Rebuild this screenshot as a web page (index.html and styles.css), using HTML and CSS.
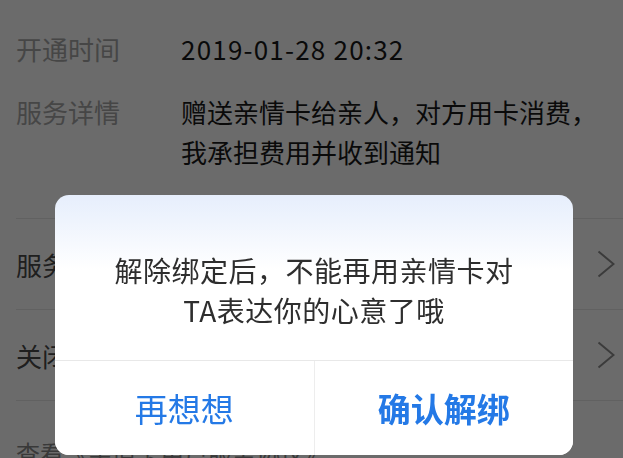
FILE: index.html
```html
<!DOCTYPE html>
<html lang="zh-CN">
<head>
<meta charset="utf-8">
<title>亲情卡</title>
<link rel="stylesheet" href="styles.css">
</head>
<body>
<div class="page">
  <section class="info">
    <div class="info-row">
      <div class="info-label">开通时间</div>
      <div class="info-value date">2019-01-28 20:32</div>
    </div>
    <div class="info-row">
      <div class="info-label">服务详情</div>
      <div class="info-value">赠送亲情卡给亲人，对方用卡消费，我承担费用并收到通知</div>
    </div>
  </section>
  <section class="menu">
    <div class="menu-row">
      <span class="menu-text">服务协议</span>
      <svg class="chevron" viewBox="0 0 18 28" width="18" height="28"><polyline points="1.5,1.5 16.5,14 1.5,26.5" fill="none" stroke="#8e8e8e" stroke-width="2"/></svg>
    </div>
    <div class="menu-row">
      <span class="menu-text">关闭亲情卡</span>
      <svg class="chevron" viewBox="0 0 18 28" width="18" height="28"><polyline points="1.5,1.5 16.5,14 1.5,26.5" fill="none" stroke="#8e8e8e" stroke-width="2"/></svg>
    </div>
    <div class="menu-link">查看《亲情卡用户服务协议》</div>
  </section>
</div>
<div class="mask"></div>
<div class="dialog">
  <div class="dialog-msg">解除绑定后，不能再用亲情卡对<br>TA表达你的心意了哦</div>
  <div class="dialog-actions">
    <div class="dialog-btn cancel">再想想</div>
    <div class="dialog-btn confirm">确认解绑</div>
  </div>
</div>
</body>
</html>
```
FILE: styles.css
```css
html, body {
  margin: 0;
  padding: 0;
  background: #ffffff;
  font-family: "Noto Sans CJK SC", "Noto Sans", sans-serif;
  overflow: hidden;
}
.page {
  height: 458px;
}
.info {
  padding: 29px 16px 0 16px;
  display: flex;
  flex-direction: column;
  gap: 23px;
}
.info-row {
  display: flex;
  font-size: 26px;
  line-height: 40px;
}
.info-label {
  width: 165px;
  flex: none;
  color: #a8a8a8;
}
.info-value {
  color: #1a1a1a;
  width: 420px;
}
.date {
  letter-spacing: 1.2px;
}
.menu {
  margin-top: 46px;
  margin-left: 16px;
}
.menu-row {
  height: 90px;
  border-top: 1px solid #e6e6e6;
  display: flex;
  align-items: center;
  justify-content: space-between;
  padding-right: 8px;
  font-size: 26px;
  color: #4a4a4a;
}
.menu-link {
  border-top: 1px solid #e6e6e6;
  padding-top: 37px;
  font-size: 24px;
  line-height: 30px;
  color: #888888;
}
.mask {
  position: fixed;
  inset: 0;
  background: rgba(0, 0, 0, 0.58);
}
.dialog {
  position: absolute;
  left: 55px;
  top: 195px;
  width: 518px;
  height: 260px;
  border-radius: 14px;
  background: linear-gradient(#e6eefc 0, #ffffff 75px);
  display: flex;
  flex-direction: column;
  overflow: hidden;
}
.dialog-msg {
  height: 165px;
  box-sizing: border-box;
  padding-top: 55px;
  text-align: center;
  font-size: 28px;
  line-height: 40px;
  letter-spacing: 0.5px;
  color: #2e2e2e;
}
.dialog-actions {
  flex: 1;
  display: flex;
  border-top: 1px solid #e8e8e8;
  background: #ffffff;
}
.dialog-btn {
  flex: 1;
  display: flex;
  align-items: center;
  justify-content: center;
  font-size: 33px;
  color: #2479e6;
}
.cancel {
  border-right: 1px solid #ededed;
  font-weight: 400;
}
.confirm {
  font-weight: 700;
}
```
